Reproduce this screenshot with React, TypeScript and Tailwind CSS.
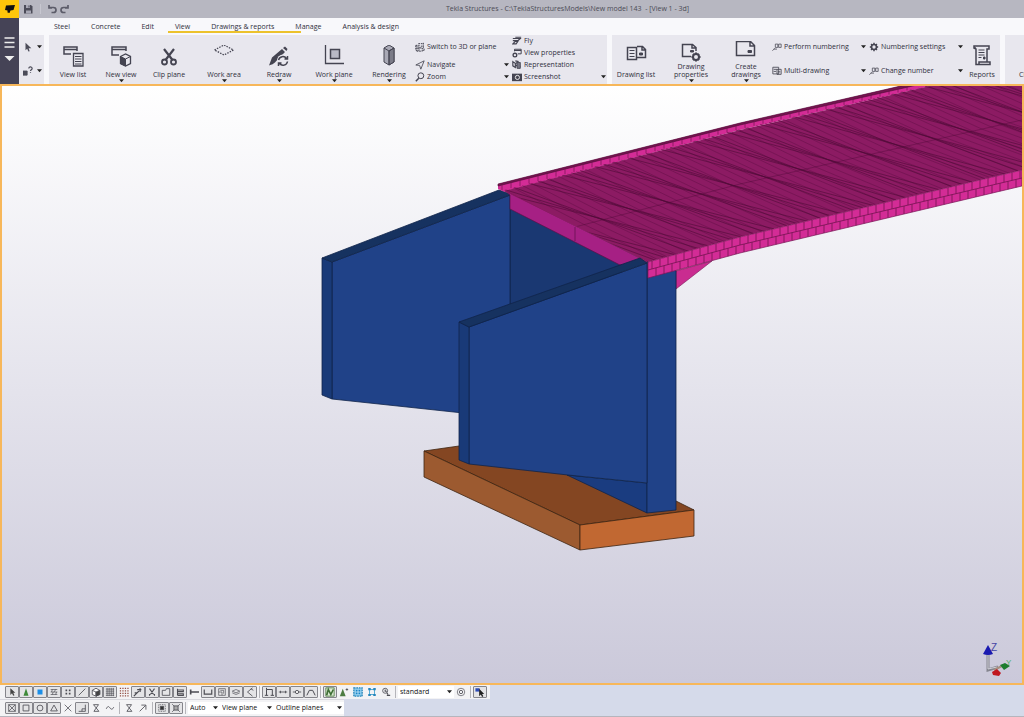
import React from 'react';

type Point = [number, number];

const ICONS = {
  viewList: (
    <>
      <path d="M9 9H2V2h13v4M2 4.500h13" strokeWidth="1.500" />
      <path d="M11.500 8.500h9.500v12.500h-9.500z" strokeWidth="1.300" />
      <path d="M13 11.500h6.500M13 14h6.500M13 16.500h6.500M13 19h6.500" />
    </>
  ),
  newView: (
    <>
      <path d="M9 10H2V2h14v4M2 4.500h14" strokeWidth="1.500" />
      <path d="M10.500 11.500l5-2.500 5 2.500v7l-5 2.500-5-2.500z" fill="#e8e7ee" strokeWidth="1.300" />
      <path d="M10.500 11.500l5 2.500v7l-5-2.500z" fill="currentColor" />
      <path d="M15.500 14l5-2.500" />
    </>
  ),
  clip: (
    <>
      <path d="M6 4l8.500 11M16 4L7.500 15" strokeWidth="2.200" />
      <circle cx="6.500" cy="17" r="2.500" strokeWidth="1.800" />
      <circle cx="15.500" cy="17" r="2.500" strokeWidth="1.800" />
    </>
  ),
  workArea: <path d="M1.500 5L11 0l9.500 5L11 10z" strokeDasharray="1.500 1.200" strokeWidth="1.300" />,
  redraw: (
    <>
      <path d="M1 20.500l3-8L14 4l3 3-7 7c-2 2-3 5-9 6.500z" fill="currentColor" stroke="none" />
      <path d="M15 3l2-1.500L19.500 4l-1 2z" fill="currentColor" stroke="none" />
      <circle cx="15" cy="15.500" r="6" fill="#e8e7ee" stroke="none" />
      <path d="M10.500 15a4.500 4.500 0 0 1 8-1.500M19.500 16.500a4.500 4.500 0 0 1-8 2M19.500 11v3h-3M10.500 21v-3h3" strokeWidth="1.500" />
    </>
  ),
  workPlane: (
    <>
      <path d="M2.500 0v18.500H21" strokeWidth="1.300" />
      <path d="M7.500 4.500h9v9h-9z" fill="#b9b9c6" strokeWidth="1.500" />
    </>
  ),
  rendering: (
    <>
      <path d="M6 3l5-3 5 3v14l-5 3-5-3z" fill="#a9a9b5" />
      <path d="M11 6l5-3v14l-5 3z" fill="#7c7c88" />
      <path d="M6 3l5 3 5-3M11 6v14" />
    </>
  ),
  drawingList: (
    <>
      <path d="M12 1.500h5.500l3 3v8H12M17 1.500v3.500h3.500" strokeWidth="1.500" />
      <path d="M2.500 2.500h9v12h-9z" strokeWidth="1.500" />
      <path d="M4.500 5.500h5M4.500 8.500h5M4.500 11.500h5" />
      <path d="M14.500 8h3v2h-3z" fill="currentColor" />
    </>
  ),
  drawingProps: (
    <>
      <path d="M11 15.500H2.500v-12h10l3.500 3v3.500M12 3.500v3.500h4" strokeWidth="1.500" />
      <path d="M10.500 9.500h3v1.500h-3z" fill="currentColor" />
      <circle cx="16" cy="16" r="3" strokeWidth="2" />
      <path d="M16 11.500v9M11.500 16h9M13 13l6 6M19 13l-6 6" strokeDasharray="1.500 6" strokeWidth="2" />
    </>
  ),
  createDrawing: (
    <>
      <path d="M1.500 0.500h14l4 4v10h-18zM15 .5v4.500h4.500" strokeWidth="1.500" />
      <path d="M13 9.500h3.500v2H13z" fill="currentColor" />
    </>
  ),
  reports: (
    <>
      <path d="M5 16V4L3 3V1h15v3h-2v13M3 1v2h2M5 16v3.500h14V17H8v2.500" strokeWidth="1.500" />
      <path d="M7.500 5h6M7.500 7.500h6M7.500 10h6M7.500 12.500h3" />
      <path d="M12.500 12h1.500v2h-1.500z" fill="currentColor" />
    </>
  ),
};

const SMALL = {
  switch3d: (
    <>
      <path d="M1 4h4v6H1zM4 2h5M10 1v4M7 5h3v3H7zM2 11h7" strokeDasharray="2 1" strokeWidth="1.200" />
      <path d="M1 6h4M8 10h3V8M1 8h4" />
    </>
  ),
  navigate: <path d="M1 6l10-5L7 11 5.500 6.500z" />,
  zoom: (
    <>
      <circle cx="7" cy="4.500" r="3.500" strokeWidth="1.200" />
      <path d="M4.500 7.500L1 11" strokeWidth="1.800" />
    </>
  ),
  fly: <path d="M1 3h10M4 1.500h7M1 5.500h6l3-2.500M1 9.500l3-3h3L5 9.500z" strokeWidth="1.400" />,
  viewProps: (
    <>
      <path d="M3 4V1.500h8V7H7M3 3h8" strokeWidth="1.200" />
      <circle cx="3.500" cy="8.500" r="2.200" strokeWidth="1.600" />
    </>
  ),
  representation: (
    <>
      <path d="M1 2l3 2v5L1 7zM5 3l5 5M5 6l4 4M4 1l4 1" strokeWidth="1.400" />
      <path d="M6 3h4v7H6z" fill="#777784" />
    </>
  ),
  screenshot: (
    <>
      <path d="M0 2h12v9H0z" fill="currentColor" stroke="none" />
      <circle cx="6.500" cy="6.500" r="2.500" stroke="#fff" />
    </>
  ),
  numbering: <path d="M.5 10.500l3-3M4 2.500h3v4H4zM8 2.500h3v4H8zM2 8.500h4" strokeWidth=".9" />,
  multi: (
    <>
      <path d="M1 1.500h7v8H1zM6 4h5v6H6z" />
      <path d="M2 4h4M2 6.500h3M7 7h3" />
    </>
  ),
  gear: (
    <>
      <circle cx="6" cy="6" r="3" strokeWidth="2" />
      <path d="M6 1v10M1 6h10M2.500 2.500l7 7M9.500 2.500l-7 7" strokeDasharray="1.500 7" strokeWidth="1.800" />
    </>
  ),
};

const TOOLS = {
  arrow: <path d="M4 1.500v8l2-2L7.500 10.500 9 9.800 7.500 7H10z" fill="#444" stroke="none" />,
  greenTriangle: <path d="M6 1.500l3 9H3z" fill="#3f8a3a" stroke="none" />,
  blueSquare: <path d="M3 3h6v6H3z" fill="#1b8fe8" stroke="none" />,
  hatch: <path d="M2 3h8M2 6h8M2 9h8M4 3l-1 3M8 3L6 6M5 6L4 9M9 6L8 9" strokeWidth=".8" />,
  dots: <path d="M3 4h2M7 4h2M3 8h2M7 8h2" strokeWidth="2" />,
  line: <path d="M2 10l8-8" />,
  cube: (
    <>
      <path d="M1.500 4L6 1.500 10.500 4v5L6 11 1.500 9z" fill="#fff" />
      <path d="M6 6l4.500-2v5L6 11z" fill="#444" />
      <path d="M1.500 4L6 6v5" />
    </>
  ),
  grid: <path d="M1 2.500h10M1 5h10M1 7.500h10M1 10h10M2.500 1v10M5 1v10M7.500 1v10M10 1v10" strokeWidth=".8" />,
  redGrid: <path d="M1 1.500h11M1 4.500h11M1 7.500h11M1 10.500h11" stroke="#934e43" strokeWidth="1.500" strokeDasharray="1.500 1.500" />,
  spanner: <path d="M1 11l6-6M5 3h5M8.500 1.500v4.500M2 7h3" strokeWidth="1.500" />,
  cut: <path d="M3 2l5 7M9 2L4 9M3 8.500v2M9 8.500v2" strokeWidth="1.300" />,
  folder: <path d="M1.500 4h4l1-2h4v8h-9z" />,
  stack: <path d="M3 2v8M3 3.500h7v2H3M3 8h7v2H3" strokeWidth="1.300" />,
  pin: <path d="M2 3v6M2 6h10M7 6H4" strokeWidth="2" />,
  channel: <path d="M1.500 3v5.500h9V3" strokeWidth="1.400" />,
  mesh: <path d="M2 2h8v8H2zM4 4h4v4M2 6h4v4" strokeWidth=".8" />,
  layers: <path d="M1.500 5L6 3l4.500 2L6 7zM1.500 7L6 9l4.500-2" strokeWidth=".8" />,
  bend: <path d="M9 1L3 6l6 5M7 2l3 2" />,
  frame: <path d="M3 10V3h7v7M1 10h4M8 10h4M3 1v2" strokeWidth="1.200" />,
  span: <path d="M1 6h10M3 4.500v3M9 4.500v3" />,
  pivot: (
    <>
      <path d="M1 6h10" />
      <circle cx="6" cy="6" r="2" fill="#eee" />
    </>
  ),
  arch: <path d="M1 10l3-6h4l3 6" strokeWidth="1.200" />,
  selectView: (
    <>
      <path d="M1 1h10v10H1z" fill="#dcebd4" stroke="#4d7d43" />
      <path d="M2 10l2-7 3 6 3-6" stroke="#3f6f36" strokeWidth="2" />
    </>
  ),
  treeStar: (
    <>
      <path d="M4.500 2l3.500 9H1z" fill="#4d7d43" stroke="none" />
      <path d="M8 3h3M9.500 1.500v3" />
    </>
  ),
  blueGrid: (
    <>
      <path d="M1 1h10v10H1z" fill="#8bcbed" stroke="#2785b9" strokeDasharray="2 1" strokeWidth="1.500" />
      <path d="M3.500 3.500h5v5h-5z" fill="#1c86c8" stroke="none" />
      <path d="M3 6h6M6 3v6" stroke="#cdeafa" />
    </>
  ),
  blueNodes: (
    <>
      <path d="M3 3h6v6H3z" stroke="#38a0d0" />
      <path d="M1.500 2.500h3M7.500 2.500h3M1.500 9.500h3M7.500 9.500h3" stroke="#2785b9" strokeWidth="2.500" />
    </>
  ),
  lens: (
    <>
      <circle cx="5" cy="4.500" r="3" />
      <path d="M5 3v2h2M7 10h4M7 7l1.500 2" strokeWidth="1.300" />
    </>
  ),
  target: (
    <>
      <circle cx="6" cy="6" r="4.500" strokeWidth=".8" />
      <circle cx="6" cy="6" r="2" />
    </>
  ),
  pick: (
    <>
      <path d="M.5 1.500h5v4h-5z" fill="#2d4bb5" stroke="none" />
      <path d="M5 2v9l2-2 1.500 3L10 11 8.500 8.500H11z" fill="#222" stroke="none" />
    </>
  ),
  boxCross: <path d="M2 2h8v8H2zM2 2l8 8M10 2l-8 8" strokeWidth=".9" />,
  box: <path d="M2.500 2.500h7v7h-7z" />,
  circle: <circle cx="6" cy="6" r="3.500" />,
  triangle: <path d="M6 2.500L10 9.500H2z" />,
  cross: <path d="M2 2l8 8M10 2l-8 8" strokeWidth=".9" />,
  corner: <path d="M10 2v8H2M6 10V7h4" />,
  hourglass: <path d="M3 2h6L3.500 10h6L3 2" />,
  wave: <path d="M1.500 7c2-4 3-3 4.500-1s3 2 4.500-1" />,
  upRight: <path d="M2 10l7-7M4 2.500h5.500V8" />,
  snapDot: (
    <>
      <path d="M2 2h8v8H2z" strokeDasharray="1 1" />
      <path d="M4 4h4v4H4z" fill="#333" />
    </>
  ),
  snapBox: (
    <>
      <path d="M3.500 3.500h5v5h-5z" fill="#aaa" />
      <path d="M1.500 1.500l2 2M10.500 1.500l-2 2M1.500 10.500l2-2M10.500 10.500l-2-2" />
    </>
  ),
};

type Tool = { icon: keyof typeof TOOLS; label: string; flat?: boolean };

const SELECTION_TOOLS: (Tool | null)[] = [
  { icon: 'arrow', label: 'Select all' },
  { icon: 'greenTriangle', label: 'Select connections' },
  { icon: 'blueSquare', label: 'Select parts' },
  { icon: 'hatch', label: 'Select surface treatments' },
  { icon: 'dots', label: 'Select points' },
  { icon: 'line', label: 'Select construction lines' },
  { icon: 'cube', label: 'Select reference models' },
  { icon: 'grid', label: 'Select grids' },
  { icon: 'redGrid', label: 'Select grid line', flat: true },
  { icon: 'spanner', label: 'Select welds' },
  { icon: 'cut', label: 'Select cuts' },
  { icon: 'folder', label: 'Select views' },
  { icon: 'stack', label: 'Select bolts' },
  { icon: 'pin', label: 'Select single bolts', flat: true },
  { icon: 'channel', label: 'Select rebar sets' },
  { icon: 'mesh', label: 'Select meshes' },
  { icon: 'layers', label: 'Select planes' },
  { icon: 'bend', label: 'Select distances' },
  null,
  { icon: 'frame', label: 'Select loads' },
  { icon: 'span', label: 'Select spans' },
  { icon: 'pivot', label: 'Select nodes' },
  { icon: 'arch', label: 'Select rigid links' },
  null,
  { icon: 'selectView', label: 'Select components' },
  { icon: 'treeStar', label: 'Select in components', flat: true },
  { icon: 'blueGrid', label: 'Select assemblies', flat: true },
  { icon: 'blueNodes', label: 'Select in assemblies', flat: true },
  { icon: 'lens', label: 'Select tasks', flat: true },
  null,
];

const SNAP_TOOLS: (Tool | null)[] = [
  { icon: 'boxCross', label: 'Snap to points' },
  { icon: 'box', label: 'Snap to end points' },
  { icon: 'circle', label: 'Snap to centers' },
  { icon: 'triangle', label: 'Snap to midpoints' },
  { icon: 'cross', label: 'Snap to intersections', flat: true },
  { icon: 'corner', label: 'Snap to perpendicular points' },
  { icon: 'hourglass', label: 'Snap to nearest points', flat: true },
  { icon: 'wave', label: 'Snap to line extensions', flat: true },
  null,
  { icon: 'hourglass', label: 'Snap to any position', flat: true },
  { icon: 'upRight', label: 'Snap to lines', flat: true },
  null,
  { icon: 'snapDot', label: 'Snap to reference lines' },
  { icon: 'snapBox', label: 'Snap to geometry' },
  null,
];

const FILTER_TOOLS: (Tool | null)[] = [
  { icon: 'target', label: 'Selection filter settings', flat: true },
  null,
  { icon: 'pick', label: 'Drag and drop' },
];

const TABS = ['Steel', 'Concrete', 'Edit', 'View', 'Drawings & reports', 'Manage', 'Analysis & design'];

const Caret = () => (
  <svg viewBox="0 0 6 4" className="h-1 w-[5px] shrink-0" aria-hidden="true">
    <path d="M0 0h6L3 3.500z" fill="#222" />
  </svg>
);

const BigButton: React.FC<{
  icon: keyof typeof ICONS;
  label: string;
  width: string;
  menu?: boolean;
}> = ({ icon, label, width, menu }) => (
  <button className={`flex h-full shrink-0 flex-col items-center ${width}`}>
    <span className="flex min-h-0 flex-1 flex-col items-center justify-end">
      <svg
        viewBox="0 0 22 22"
        className={`h-[22px] w-[22px] shrink-0 text-[#444451] ${label.includes('\n') ? '' : 'mb-1'}`}
        fill="none"
        stroke="currentColor"
        aria-hidden="true"
      >
        {ICONS[icon]}
      </svg>
      <span className="text-center leading-2 whitespace-pre">{label}</span>
    </span>
    <span className="flex h-[5px] items-start">{menu && <Caret />}</span>
  </button>
);

const SmallButton: React.FC<{ icon: keyof typeof SMALL; label: string; tall?: boolean; menu?: boolean }> = ({
  icon,
  label,
  tall,
  menu,
}) => (
  <button className={`flex w-full items-center gap-0.5 pr-px pl-0.5 ${tall ? 'h-6' : 'h-3'}`}>
    <svg
      viewBox="0 0 12 12"
      className="h-2.5 w-2.5 shrink-0 text-[#444451]"
      fill="none"
      stroke="currentColor"
      aria-hidden="true"
    >
      {SMALL[icon]}
    </svg>
    <span className="flex-1 text-left whitespace-nowrap">{label}</span>
    {menu && <Caret />}
  </button>
);

const ToolButton: React.FC<{ tool: Tool }> = ({ tool }) => (
  <button
    aria-label={tool.label}
    className={`flex h-3 w-3.5 shrink-0 items-center justify-center rounded-[1px] border ${
      tool.flat ? 'border-transparent' : 'border-[#85858b] bg-[#e4e4e6]'
    }`}
  >
    <svg viewBox="0 0 12 12" className="h-2.5 w-2.5" fill="none" stroke="#4c4c53" aria-hidden="true">
      {TOOLS[tool.icon]}
    </svg>
  </button>
);

const ToolStrip: React.FC<{ tools: (Tool | null)[] }> = ({ tools }) => (
  <>
    {tools.map((tool, i) =>
      tool ? (
        <ToolButton key={i} tool={tool} />
      ) : (
        <span key={i} className="flex h-3 w-[5px] shrink-0 justify-center">
          <span className="w-px bg-[#b5b5ba]" />
        </span>
      ),
    )}
  </>
);

const ToolSelect: React.FC<{ label: string; value: string; width: string }> = ({ label, value, width }) => (
  <label className={`relative flex h-3 shrink-0 items-center bg-white ${width}`}>
    <select aria-label={label} className="h-3 w-full appearance-none bg-transparent pl-0.5 leading-3 outline-none">
      <option>{value}</option>
    </select>
    <span className="pointer-events-none absolute right-0.5 flex">
      <Caret />
    </span>
  </label>
);

// Deck edges, each a polyline that bends slightly with the camber of the bridge
const DECK_TOP: Point[] = [[504, 190], [740, 129], [930, 85], [1200, 24]];
const DECK_MID: Point[] = [[575, 227], [740, 184], [1022, 120], [1300, 58]];
const DECK_LOW: Point[] = [[648, 262], [740, 237], [1022, 170], [1300, 105]];
const BRICK_MID: Point[] = [[648, 270], [740, 245], [1022, 178]];
const BRICK_LOW: Point[] = [[648, 278], [740, 253], [1022, 186]];
const KERB_TOP: Point[] = [[498, 186], [740, 125], [930, 81]];

const yAt = (line: Point[], x: number) => {
  let i = 0;
  while (i < line.length - 2 && x > line[i + 1][0]) i++;
  const [x0, y0] = line[i];
  const [x1, y1] = line[i + 1];
  return y0 + ((x - x0) / (x1 - x0)) * (y1 - y0);
};

const seg = (a: Point[], xa: number, b: Point[], xb: number) =>
  `M${xa.toFixed(1)} ${yAt(a, xa).toFixed(1)}L${xb.toFixed(1)} ${yAt(b, xb).toFixed(1)}`;

const PLANKS = Array.from({ length: 62 }, (_, i) => {
  const x = 504 + i * 9;
  const drift = i * 0.25;
  const mid = x + 71 + drift;
  const low = x + 144 + drift * 2;
  return seg(DECK_TOP, x, DECK_MID, mid) + seg(DECK_MID, mid, DECK_LOW, low);
}).join('');

// Long mesh triangles: neighbouring edges close in on each other around mid width
const STREAKS = Array.from({ length: 20 }, (_, k) => {
  const x = 430 + k * 33;
  return [0, 1, 2]
    .map((j) => seg(DECK_TOP, x + j * 9, DECK_LOW, x + 212 - j * 10))
    .join('');
}).join('');

const BRICKS = Array.from({ length: 47 }, (_, i) => {
  const x = 652 + i * 8;
  return seg(DECK_LOW, x, BRICK_MID, x) + seg(BRICK_MID, x + 4, BRICK_LOW, x + 4);
}).join('');

const KERB = Array.from({ length: 46 }, (_, i) => seg(KERB_TOP, 502 + i * 9, DECK_TOP, 502 + i * 9)).join('');

const ModelView = () => (
  <svg
    viewBox="2 86 1020 597"
    preserveAspectRatio="xMidYMid slice"
    className="min-h-0 w-full flex-1"
    role="img"
    aria-label="Bridge abutment and deck model"
  >
    <defs>
      <clipPath id="deck">
        <path d="M504 190L740 129 930 85H1022V170L740 237 648 262z" />
      </clipPath>
    </defs>

    {/* footing */}
    <g stroke="#3d2412" strokeWidth=".8" strokeLinejoin="round">
      <path d="M424 451l35-5 217 55 18 9-114 15z" fill="#844622" />
      <path d="M424 451l156 74v25l-156-73z" fill="#9c5a30" />
      <path d="M580 525l114-15v26l-114 14z" fill="#c16832" />
    </g>

    {/* back wall and left wing */}
    <g stroke="#10244a" strokeWidth=".8" strokeLinejoin="round">
      <path d="M510 205l112 60v60H510z" fill="#1a3872" />
      <path d="M332 262l178-67v223l-178-19z" fill="#204288" />
      <path d="M322 258l10 4v137l-10-4z" fill="#193a78" />
      <path d="M322 258l177-68 11 4v1l-178 67z" fill="#163260" />
    </g>

    {/* deck */}
    <path d="M504 190l6 5v14l110 56 28-3z" fill="#a62084" stroke="#5d1148" strokeWidth=".7" />
    <path d="M575 227v14" stroke="#5d1148" strokeWidth=".7" />
    <path d="M498 184L740 123 905 85h30L740 130 506 191l-1 1-7-3z" fill="#d32c96" />
    <path d="M498 184L740 123 905 85h12L740 125 498 186z" fill="#741550" stroke="#4b0d34" strokeWidth=".6" />
    <path d="M504 191L740 130 934 85H1022V170L740 237 648 262z" fill="#8c1b63" />
    <path d={KERB} stroke="#741550" strokeWidth=".7" />
    <g clipPath="url(#deck)" stroke="#4f0b38" fill="none">
      <path d={PLANKS} strokeWidth=".4" opacity=".8" />
      <path d={STREAKS} strokeWidth=".6" />
      <path d="M575 227L740 184 1022 120" strokeWidth=".4" />
    </g>
    <path d="M676 271l36-10-36 28z" fill="#c92c90" stroke="#7a1958" strokeWidth=".6" />

    {/* pier and right wing */}
    <g stroke="#10244a" strokeWidth=".8" strokeLinejoin="round">
      <path d="M567 475l80 8v30z" fill="#1a3c80" />
      <path d="M647 262l29 8v240l-29 3z" fill="#204288" />
      <path d="M469 327l178-64v220l-79-8-99-11z" fill="#204288" />
      <path d="M459 322l10 5v137l-10-4z" fill="#193a78" />
      <path d="M459 322l181-64 7 5-178 64z" fill="#163260" />
    </g>

    <path d="M648 262l92-25 282-67v16l-282 67-92 25z" fill="#d32c96" stroke="#7a1958" strokeWidth=".7" />
    <path d={BRICKS} stroke="#741550" strokeWidth=".8" />
    <path d="M648 270l92-25 282-67" fill="none" stroke="#741550" strokeWidth=".8" />

    {/* coordinate axes */}
    <path d="M988 654v16l10-3" fill="none" stroke="#85858f" strokeWidth="3" />
    <path d="M988 654v15l9-2" fill="none" stroke="#d0d0d8" />
    <path d="M988 645l5 9q-5 2-10 0z" fill="#1a1ab0" />
    <path d="M994 670l10-5" stroke="#a68f80" strokeWidth="2" />
    <path d="M992 672l5-3 4 4-2 3-6-1z" fill="#c01820" />
    <path d="M1000 665l5-2 5 3-6 4z" fill="#1c7d2c" />
    <text x="991" y="651" className="font-['Liberation_Sans'] text-[10px]" fill="#4545a5">
      Z
    </text>
    <text x="1006" y="665" className="font-['Liberation_Sans'] text-[8px]" fill="#4fb068">
      Y
    </text>
  </svg>
);

const TitleBar = () => (
  <header className="flex h-[18px] shrink-0 items-center bg-[#b7b7c1] text-[#4b4b55]">
    <div className="flex h-full w-[19px] items-center justify-center bg-[#ffc60a]">
      <svg viewBox="0 0 12 10" className="h-2.5 w-3" aria-hidden="true">
        <path d="M2 1.500L11 1 9.500 6 6.500 6.500 5.500 9 3.500 8.500V6.500L1 6z" fill="#111" />
      </svg>
    </div>
    <button aria-label="Save" className="flex w-[22px] justify-center border-r border-[#c7c7d0] pr-1">
      <svg viewBox="0 0 10 10" className="h-2.5 w-2.5">
        <path d="M1 1h7l1.500 1.500V9.500H1z" fill="#4c4c59" />
        <path d="M3 1h4v3H3zM3 6.500h5v3H3z" fill="#a7a7b4" />
        <path d="M5.500 1.500h1v2h-1z" fill="#4c4c59" />
      </svg>
    </button>
    <button aria-label="Undo" className="ml-1 flex w-3.5 justify-center">
      <svg viewBox="0 0 10 10" className="h-2.5 w-2.5" fill="none" stroke="#5c5c69" strokeWidth="1.700">
        <path d="M2 3.500h4.500a2.500 2.500 0 0 1 0 5H4.500M2 1v3h3" />
      </svg>
    </button>
    <button aria-label="Redo" className="flex w-3 justify-center">
      <svg viewBox="0 0 10 10" className="h-2.5 w-2.5" fill="none" stroke="#5c5c69" strokeWidth="1.700">
        <path d="M8 3.500H3.500a2.500 2.500 0 0 0 0 5h2M8 1v3H5" />
      </svg>
    </button>
    <h1 className="flex-1 pl-10 text-center whitespace-pre">
      {'Tekla Structures - C:\\TeklaStructuresModels\\New model 143  - [View 1 - 3d]'}
    </h1>
  </header>
);

const Ribbon = () => (
  <div className="flex h-[49px] overflow-hidden">
    <div className="flex w-[25px] shrink-0 flex-col bg-[#e8e7ee]">
      <button aria-label="Select" className="flex h-6 items-center justify-between pr-0.5 pl-1">
        <svg viewBox="0 0 12 12" className="h-2.5 w-2.5">
          <path d="M3 1v9l2-2 1.500 3.500L8 11 6.800 7.500H10z" fill="#4c4c59" />
        </svg>
        <Caret />
      </button>
      <button aria-label="Inquire" className="flex h-6 items-center justify-between pr-0.5 pl-1">
        <svg viewBox="0 0 12 12" className="h-2.5 w-2.5" fill="none" stroke="#4c4c59">
          <path d="M0 6h5v5H0z" fill="#4c4c59" />
          <path d="M7 3c0-3 4-2 4 0 0 1.500-2 1.500-2 3M9 7.500v1" strokeWidth="1.400" />
        </svg>
        <Caret />
      </button>
    </div>
    <section aria-label="View" className="ml-[5px] flex shrink-0 bg-[#e8e7ee]">
      <BigButton icon="viewList" label="View list" width="w-12" />
      <BigButton icon="newView" label="New view" width="w-12" menu />
      <BigButton icon="clip" label="Clip plane" width="w-12" />
      <BigButton icon="workArea" label="Work area" width="w-[62px]" menu />
      <BigButton icon="redraw" label="Redraw" width="w-12" menu />
      <BigButton icon="workPlane" label="Work plane" width="w-[62px]" menu />
      <BigButton icon="rendering" label="Rendering" width="w-12" menu />
      <div className="w-[97px]">
        <SmallButton icon="switch3d" label="Switch to 3D or plane" tall />
        <SmallButton icon="navigate" label="Navigate" menu />
        <SmallButton icon="zoom" label="Zoom" menu />
      </div>
      <div className="w-[97px]">
        <SmallButton icon="fly" label="Fly" />
        <SmallButton icon="viewProps" label="View properties" />
        <SmallButton icon="representation" label="Representation" />
        <SmallButton icon="screenshot" label="Screenshot" menu />
      </div>
    </section>
    <section aria-label="Drawings and reports" className="ml-[5px] flex shrink-0 bg-[#e8e7ee]">
      <BigButton icon="drawingList" label="Drawing list" width="w-12" />
      <BigButton icon="drawingProps" label={'Drawing\nproperties'} width="w-[62px]" menu />
      <BigButton icon="createDrawing" label={'Create\ndrawings'} width="w-12" menu />
      <div className="w-[97px]">
        <SmallButton icon="numbering" label="Perform numbering" tall menu />
        <SmallButton icon="multi" label="Multi-drawing" tall menu />
      </div>
      <div className="w-[97px]">
        <SmallButton icon="gear" label="Numbering settings" tall menu />
        <SmallButton icon="numbering" label="Change number" tall menu />
      </div>
      <BigButton icon="reports" label="Reports" width="w-9" />
    </section>
    <section aria-label="Clash check" className="ml-[5px] flex min-w-0 flex-1 items-end overflow-hidden bg-[#e8e7ee] pb-[5px] pl-3.5">
      <button className="leading-2 whitespace-nowrap">Clash check</button>
    </section>
  </div>
);

export default function App() {
  return (
    <div className="flex h-screen flex-col overflow-hidden bg-[#d5daea] font-['Open_Sans',sans-serif] text-[7px] leading-[10px] text-[#2f2f3c]">
      <TitleBar />
      <div className="flex shrink-0 bg-[#f8f8fb]">
        <button aria-label="File menu" className="flex w-[19px] shrink-0 justify-center bg-[#454356] pt-4">
          <svg viewBox="0 0 11 28" className="h-7 w-[11px]" aria-hidden="true">
            <path d="M.5 4h10M.5 8.500h10M.5 13h10" stroke="#eee" strokeWidth="1.600" />
            <path d="M.5 22h10L5.500 27z" fill="#eee" />
          </svg>
        </button>
        <div className="min-w-0 flex-1">
          <nav className="h-[17px]">
            <div className="flex h-[13px] items-end gap-[21px] pl-[35px] whitespace-nowrap">
              {TABS.map((tab) => (
                <button key={tab} className="leading-2">
                  {tab}
                </button>
              ))}
            </div>
            <div className="ml-[149px] h-0.5 w-[133px] bg-[#ecc22c]" />
          </nav>
          <Ribbon />
        </div>
      </div>

      <main className="flex min-h-0 flex-1 flex-col border-2 border-[#f7b75a] bg-linear-to-b from-white to-[#cbc9da]">
        <ModelView />
      </main>

      <footer className="flex h-8 shrink-0 flex-col items-start text-[#111]">
        <div className="flex h-3.5 items-center bg-[#f3f3f5] pr-[3px] pl-[5px]">
          <ToolStrip tools={SELECTION_TOOLS} />
          <ToolSelect label="Selection filter" value="standard" width="w-14" />
          <ToolStrip tools={FILTER_TOOLS} />
        </div>
        <div className="flex h-[17px] items-center border-t border-[#d8d8de] bg-[#f3f3f5] pl-[5px]">
          <ToolStrip tools={SNAP_TOOLS} />
          <ToolSelect label="Snap depth" value="Auto" width="w-8" />
          <ToolSelect label="Plane type" value="View plane" width="w-[54px]" />
          <ToolSelect label="Outline" value="Outline planes" width="w-[70px]" />
        </div>
        <div className="h-px w-full bg-[#b5b5bd]" />
      </footer>
    </div>
  );
}
